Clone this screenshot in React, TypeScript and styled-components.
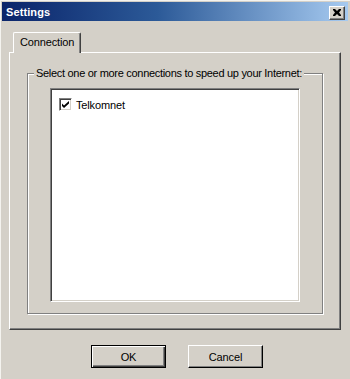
import React from 'react'
import styled, { createGlobalStyle } from 'styled-components'

const GlobalStyle = createGlobalStyle`
    html, body {
        margin: 0;
        padding: 0;
        background: #d4d0c8;
    }
    body {
        font-family: 'Liberation Sans', Arial, sans-serif;
        font-size: 11px;
        letter-spacing: -0.15px;
        color: #000;
    }
`

const Window = styled.div`
    width: 350px;
    height: 379px;
    box-sizing: border-box;
    padding: 2px;
    background: #d4d0c8;
    box-shadow: inset 1px 1px 0 #f4f3ef;
    display: flex;
    flex-direction: column;
    overflow: hidden;
`

const TitleBar = styled.div`
    height: 19px;
    display: flex;
    align-items: center;
    justify-content: space-between;
    padding: 0 3px 0 4px;
    background: linear-gradient(90deg, #0a246a 0%, #2c5a98 45%, #a6caf0 100%);
`

const Title = styled.span`
    color: #fff;
    font-weight: bold;
    font-size: 11px;
    letter-spacing: 0.1px;
    margin-top: 1px;
`

const CloseButton = styled.div`
    width: 16px;
    height: 14px;
    box-sizing: border-box;
    margin-top: 2px;
    background: #d4d0c8;
    border-top: 1px solid #fff;
    border-left: 1px solid #fff;
    border-right: 1px solid #404040;
    border-bottom: 1px solid #404040;
    box-shadow: inset -1px -1px 0 #808080;
    display: flex;
    align-items: center;
    justify-content: center;
`

const Content = styled.div`
    padding: 11px 7px 0 7px;
    display: flex;
    flex-direction: column;
`

const TabStrip = styled.div`
    height: 20px;
    display: flex;
    align-items: flex-end;
`

const Tab = styled.div`
    position: relative;
    z-index: 1;
    height: 21px;
    margin-left: 4px;
    margin-bottom: -1px;
    box-sizing: border-box;
    padding: 0 6px 0 6px;
    line-height: 19px;
    background: #d4d0c8;
    border-top: 1px solid #fff;
    border-left: 1px solid #fff;
    border-right: 1px solid #404040;
    border-radius: 2px 2px 0 0;
    box-shadow: inset -1px 0 0 #808080;
`

const Panel = styled.div`
    height: 278px;
    box-sizing: border-box;
    padding: 20px 17px 15px 17px;
    border-top: 1px solid #fff;
    border-left: 1px solid #fff;
    border-right: 1px solid #404040;
    border-bottom: 1px solid #404040;
    box-shadow: inset -1px -1px 0 #808080;
    display: flex;
`

const GroupBox = styled.div`
    position: relative;
    flex: 1;
    border: 1px solid #808080;
    box-shadow: inset 1px 1px 0 #fff, 1px 1px 0 #fff;
    padding: 14px 22px 11px 22px;
    display: flex;
`

const GroupLabel = styled.span`
    position: absolute;
    top: -7px;
    left: 6px;
    padding: 0 2px;
    line-height: 13px;
    letter-spacing: -0.3px;
    background: #d4d0c8;
    white-space: nowrap;
`

const ListBox = styled.div`
    flex: 1;
    background: #fff;
    border-top: 1px solid #808080;
    border-left: 1px solid #808080;
    border-right: 1px solid #fff;
    border-bottom: 1px solid #fff;
    box-shadow: inset 1px 1px 0 #404040, inset -1px -1px 0 #d4d0c8;
    padding: 9px 8px;
`

const ListItem = styled.div`
    display: flex;
    align-items: center;
    gap: 4px;
    height: 13px;
`

const CheckBox = styled.div`
    width: 13px;
    height: 13px;
    box-sizing: border-box;
    background: #fff;
    border-top: 1px solid #808080;
    border-left: 1px solid #808080;
    border-right: 1px solid #fff;
    border-bottom: 1px solid #fff;
    box-shadow: inset 1px 1px 0 #404040, inset -1px -1px 0 #d4d0c8;
    display: flex;
    align-items: center;
    justify-content: center;
`

const ButtonRow = styled.div`
    display: flex;
    justify-content: center;
    gap: 22px;
    padding-left: 4px;
    margin-top: 15px;
`

const Button = styled.div<{ isDefault?: boolean }>`
    width: 75px;
    height: 23px;
    box-sizing: border-box;
    display: flex;
    align-items: center;
    justify-content: center;
    background: #d4d0c8;
    border: 1px solid ${(props) => (props.isDefault ? '#000' : '#fff')};
    border-right-color: #000;
    border-bottom-color: #000;
    box-shadow: ${(props) =>
        props.isDefault
            ? 'inset 1px 1px 0 #fff, inset -1px -1px 0 #404040, inset -2px -2px 0 #808080'
            : 'inset -1px -1px 0 #808080'};
`

const App = () => {
    return (
        <Window>
            <GlobalStyle />
            <TitleBar>
                <Title>Settings</Title>
                <CloseButton>
                    <svg width="8" height="7" viewBox="0 0 8 7">
                        <path
                            d="M0 0h2l2 2 2-2h2v1L6 3.5 8 6v1H6L4 5 2 7H0V6l2-2.5L0 1z"
                            fill="#000"
                        />
                    </svg>
                </CloseButton>
            </TitleBar>
            <Content>
                <TabStrip>
                    <Tab>Connection</Tab>
                </TabStrip>
                <Panel>
                    <GroupBox>
                        <GroupLabel>
                            Select one or more connections to speed up your Internet:
                        </GroupLabel>
                        <ListBox>
                            <ListItem>
                                <CheckBox>
                                    <svg width="7" height="7" viewBox="0 0 7 7">
                                        <path
                                            d="M0 2.5L2 4.5 7 0V2.5L2 7 0 5z"
                                            fill="#000"
                                        />
                                    </svg>
                                </CheckBox>
                                <span>Telkomnet</span>
                            </ListItem>
                        </ListBox>
                    </GroupBox>
                </Panel>
                <ButtonRow>
                    <Button isDefault>OK</Button>
                    <Button>Cancel</Button>
                </ButtonRow>
            </Content>
        </Window>
    )
}

export default App
